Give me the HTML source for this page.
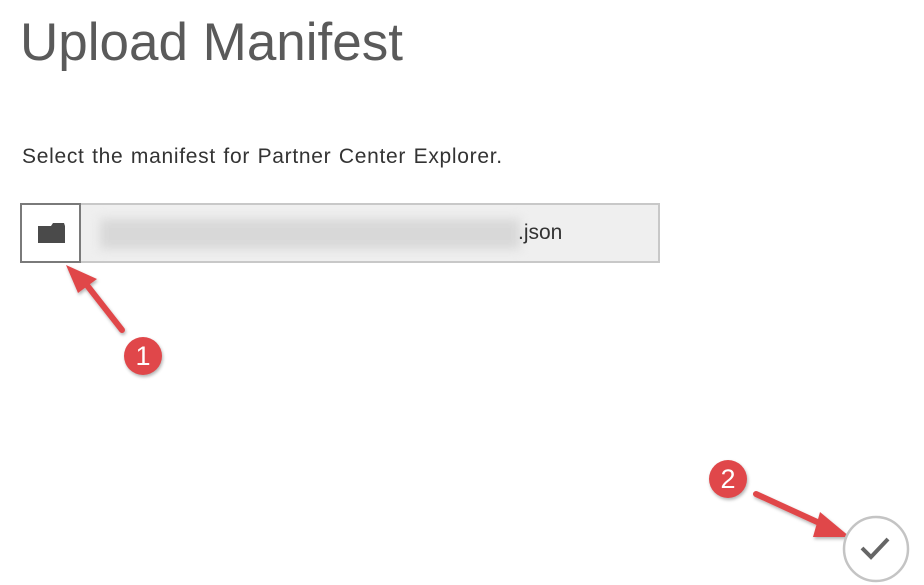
<!DOCTYPE html>
<html><head><style>
body{margin:0;width:924px;height:585px;background:#fff;position:relative;overflow:hidden;font-family:"Liberation Sans",sans-serif;}
.t{position:absolute;left:20px;top:12px;font-size:53px;font-weight:300;color:#5a5a5a;letter-spacing:0px;}
.s{position:absolute;left:22px;top:145px;font-size:21px;color:#333;letter-spacing:0.7px;word-spacing:1px;}
.box{position:absolute;left:20px;top:203px;width:636px;height:56px;border:2px solid #c8c8c8;background:#efefef;}
.ib{position:absolute;left:20px;top:203px;width:57px;height:56px;border:2px solid #7a7a7a;background:#fff;}
.blur{position:absolute;left:100px;top:219px;width:420px;height:30px;background:#d8d8d8;filter:blur(5px);}
.j{position:absolute;left:518px;top:221px;font-size:21px;color:#333;}
.b{position:absolute;width:38px;height:38px;border-radius:50%;background:#e0474a;color:#fff;font-size:27px;text-align:center;line-height:38px;box-shadow:1px 2px 3px rgba(0,0,0,.3);}
</style></head><body>
<div class="t">Upload Manifest</div>
<div class="s">Select the manifest for Partner Center Explorer.</div>
<div class="box"></div><div class="blur"></div><div class="j">.json</div>
<div class="ib"><svg width="57" height="56"><path d="M16 21h13l2-3h11l1 3v17H16z" fill="#4a4a4a"/></svg></div>
<svg style="position:absolute;left:0;top:0" width="924" height="585">
<defs><filter id="sh"><feDropShadow dx="1" dy="2" stdDeviation="1.5" flood-opacity=".3"/></filter></defs>
<g filter="url(#sh)" fill="#e0474a" stroke="#e0474a">
<line x1="122" y1="330" x2="86" y2="284" stroke-width="6" stroke-linecap="round"/>
<polygon points="66,265 97,279 78,293" stroke="none"/>
<line x1="756" y1="494" x2="826" y2="526" stroke-width="6" stroke-linecap="round"/>
<polygon points="850,537 820,512 813,537" stroke="none"/>
</g>
<circle cx="876" cy="549" r="32" fill="#fff" stroke="#c4c4c4" stroke-width="2.5"/>
<path d="M862 548l9 9 17-18" fill="none" stroke="#666" stroke-width="4"/>
</svg>
<div class="b" style="left:124px;top:337px">1</div>
<div class="b" style="left:709px;top:460px">2</div>
</body></html>
